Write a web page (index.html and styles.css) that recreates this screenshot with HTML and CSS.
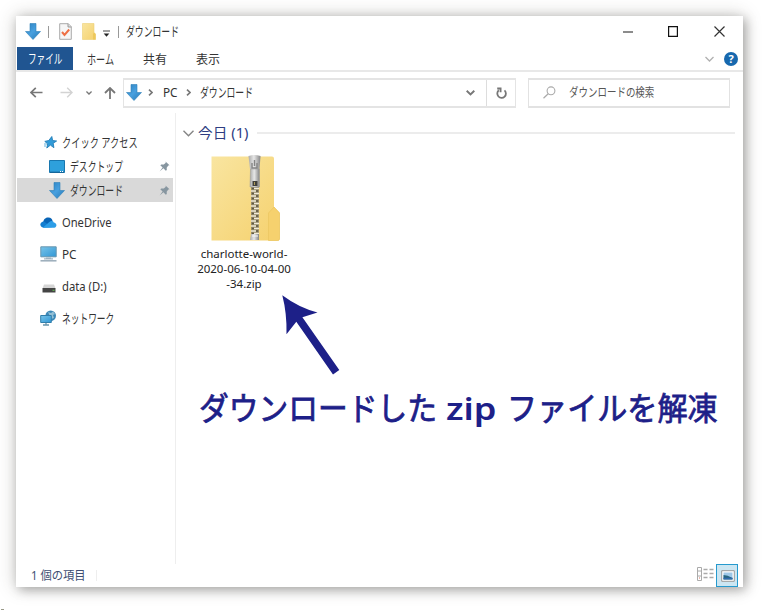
FILE: index.html
```
<!DOCTYPE html>
<html lang="ja">
<head>
<meta charset="utf-8">
<title>ダウンロード</title>
<link rel="stylesheet" href="styles.css">
</head>
<body>
<svg class="defs" width="0" height="0">
  <defs>
    <linearGradient id="blue" x1="0" y1="0" x2="1" y2="1"><stop stop-color="#2c80bd"/><stop offset=".5" stop-color="#48a0df"/><stop offset="1" stop-color="#2578b6"/></linearGradient>
    <linearGradient id="screen" x1="0" y1="0" x2="1" y2="1"><stop stop-color="#78c4e9"/><stop offset="1" stop-color="#3197d5"/></linearGradient>
    <linearGradient id="yellow" x1="0" y1="0" x2="1" y2="1"><stop stop-color="#f9e5a0"/><stop offset="1" stop-color="#f5d16e"/></linearGradient>
    <linearGradient id="metal"><stop stop-color="#aaa"/><stop offset=".45" stop-color="#e7e7e7"/><stop offset="1" stop-color="#858585"/></linearGradient>
    <pattern id="teeth" width="8" height="5" patternUnits="userSpaceOnUse"><rect width="8" height="5" fill="#968b68"/><path d="M0 1h5M3 3.500h5" stroke="#f0ead8" stroke-width="1.600"/><path d="M5 1h2M1 3.500h2" stroke="#5d5745" stroke-width="1.400"/></pattern>
    <symbol id="down" viewBox="0 0 16 17"><path d="M5 .5h6v8h4.500L8 16.500.5 8.500H5z" fill="url(#blue)" stroke="#2d7fb9" stroke-width=".6"/></symbol>
    <symbol id="pin" viewBox="0 0 11 11"><path d="M6.500.5l4 3.800-1.200.3-1.600 2.200.1 2.200-1 .8-2.400-2.500L.6 10.500l3-3.900L1.300 4.200l1-.8 2.500.1 2-1.700z" fill="#8796a0"/></symbol>
  </defs>
</svg>
<main class="window">
  <header class="titlebar">
    <svg width="16" height="17"><use href="#down"/></svg>
    <i class="sep"></i>
    <svg width="13" height="17" viewBox="0 0 13 17"><path d="M.7.700h8.600l3 3v12.600H.7z" fill="#f6f6f6" stroke="#aaa"/><path d="M9 .7v3.300h3.300" fill="#ddd" stroke="#999"/><path d="M3 9l2.500 3 4.700-5.500" fill="none" stroke="#ee7045" stroke-width="2"/></svg>
    <svg width="14" height="17" viewBox="0 0 14 17"><path d="M.5.500H12v9l1.500 1.500v5.500H.5z" fill="url(#yellow)" stroke="#ecd076" stroke-width=".6"/><path d="M11 16.500V11l1-1.500 1.500 1.500v5.500z" fill="#edc85c"/></svg>
    <svg class="drop" width="7" height="7" viewBox="0 0 7 7"><path d="M0 1h7" stroke="#444"/><path d="M.7 3.500h5.600L3.500 6.700z" fill="#222"/></svg>
    <i class="sep"></i>
    <span class="label kana title">ダウンロード</span>
    <svg class="min" width="10" height="2"><path d="M0 1h10" stroke="#666" stroke-width="1.500"/></svg>
    <svg width="10" height="11" viewBox="0 0 10 11"><path d="M.6.600h8.800v9.800H.6z" fill="none" stroke="#111" stroke-width="1.200"/></svg>
    <svg width="11" height="11" viewBox="0 0 11 11"><path d="M.5.500l10 10m0-10l-10 10" stroke="#333" stroke-width="1.200"/></svg>
  </header>
  <nav class="tabs">
    <span class="tab active"><b class="label kana file">ファイル</b></span>
    <span class="label kana home">ホーム</span>
    <span class="label kanji">共有</span>
    <span class="label kanji">表示</span>
    <svg width="9" height="6" viewBox="0 0 9 6"><path d="M.5 1l4 4 4-4" fill="none" stroke="#b0b0b0" stroke-width="1.300"/></svg>
    <span class="help">?</span>
  </nav>
  <section class="addressbar">
    <svg width="13" height="11" viewBox="0 0 13 11"><path d="M12.500 5.500H1M5.800.8L1 5.500l4.800 4.700" fill="none" stroke="#777" stroke-width="1.700"/></svg>
    <svg width="13" height="11" viewBox="0 0 13 11"><path d="M.5 5.500H12M7.200.8L12 5.500l-4.800 4.700" fill="none" stroke="#d3d3d3" stroke-width="1.400"/></svg>
    <svg width="6" height="4" viewBox="0 0 6 4"><path d="M.4.500L3 3 5.600.5" fill="none" stroke="#777" stroke-width="1.400"/></svg>
    <svg class="up" width="12" height="12" viewBox="0 0 12 12"><path d="M6 12V1M1 6l5-5 5 5" fill="none" stroke="#777" stroke-width="1.800"/></svg>
    <div class="path">
      <svg width="16" height="17"><use href="#down"/></svg>
      <svg width="5" height="7" viewBox="0 0 5 7"><path d="M1 .6l3 2.900-3 2.900" fill="none" stroke="#777" stroke-width="1.600"/></svg>
      <span class="label pc">PC</span>
      <svg width="5" height="7" viewBox="0 0 5 7"><path d="M1 .6l3 2.900-3 2.900" fill="none" stroke="#777" stroke-width="1.600"/></svg>
      <span class="label kana title">ダウンロード</span>
      <svg width="9" height="6" viewBox="0 0 9 6"><path d="M.7.800l3.800 3.700L8.300.8" fill="none" stroke="#777" stroke-width="1.900"/></svg>
      <div class="refresh"><svg width="11" height="12" viewBox="0 0 11 12"><path d="M8.500 3.400A4.300 4.300 0 1 1 2.800 3.300M1.200 1.500h3.400v3.700" fill="none" stroke="#777" stroke-width="1.800"/></svg></div>
    </div>
    <div class="search">
      <svg width="13" height="13" viewBox="0 0 13 13"><circle cx="8" cy="4.800" r="3.900" fill="none" stroke="#aaa" stroke-width="1.100"/><path d="M5.200 7.700L.5 12.300" stroke="#aaa" stroke-width="1.200"/></svg>
      <span class="label query">ダウンロードの検索</span>
    </div>
  </section>
  <section class="body">
    <aside class="sidebar">
      <div class="row root">
        <svg width="13" height="13" viewBox="0 0 13 13"><path d="M7.800.5l.8 4 4 .5-3.400 2.200.7 4.500-3.500-2.600L2.800 12l.9-4.200L.8 5.400l4-.9z" fill="#319bd8" stroke="#237eb8" stroke-width=".9"/><path d="M0 8h3M0 10h2" stroke="#67b4de"/></svg>
        <span class="label quick">クイック アクセス</span>
      </div>
      <div class="row child">
        <svg width="16" height="13" viewBox="0 0 16 13"><path d="M.5.500h15v12H.5z" fill="#2ea0dc" stroke="#1977af"/><path d="M1 12.200h14" stroke="#155f91"/><path d="M11 11.500h1m1 0h1" stroke="#fff"/></svg>
        <span class="label desk">デスクトップ</span><svg width="11" height="11"><use href="#pin"/></svg>
      </div>
      <div class="row child selected">
        <svg width="16" height="17"><use href="#down"/></svg>
        <span class="label kana dl">ダウンロード</span><svg width="11" height="11"><use href="#pin"/></svg>
      </div>
      <div class="row drive">
        <svg width="17" height="11" viewBox="0 0 17 11"><path d="M3 7C3 2 6 0 8.500.5 11 .6 12 2 12.600 4L9 8z" fill="#0864b6"/><path d="M3.500 10.800C-1 10-.5 4.500 4 4.400l8 5.800z" fill="#127dd0"/><path d="M3 10.500l6-5.200c2-2 4.500-1.500 4.700.2 3 .1 4 4.300.5 5.300H4z" fill="#2c9de7"/></svg>
        <span class="label one">OneDrive</span>
      </div>
      <div class="row drive">
        <svg width="17" height="16" viewBox="0 0 17 16"><path d="M.8.800h15.400v10H.8z" fill="url(#screen)" stroke="#6896af"/><path d="M6 11h5v2H6z" fill="#bccbd4"/><path d="M4 12.900h9" stroke="#8ca4b4"/><path d="M.5 14.800h16" stroke="#9aacba" stroke-width="1.500"/></svg>
        <span class="label pc">PC</span>
      </div>
      <div class="row drive data">
        <svg width="14" height="9" viewBox="0 0 14 9"><path d="M2 .5h10l1.500 4H.5z" fill="#d5d5d5"/><path d="M.5 4h13v4.500H.5z" fill="#444"/><path d="M10.500 6.300h2" stroke="#62ba50"/></svg>
        <span class="label disk">data (D:)</span>
      </div>
      <div class="row drive">
        <svg width="17" height="16" viewBox="0 0 17 16"><circle cx="10.700" cy="5.700" r="5.300" fill="#3c88b7"/><path d="M8 2l3 1 2-1.500 2 2.500-2 1 1 3-3 1" fill="#93bfd5"/><path d="M.7 5.500h10.600v7H.7z" fill="url(#screen)" stroke="#317eab"/><path d="M6 13v1.500M3 15h6" stroke="#6895ac" stroke-width="1.300"/></svg>
        <span class="label net">ネットワーク</span>
      </div>
    </aside>
    <section class="files">
      <div class="group"><svg width="11" height="7" viewBox="0 0 11 7"><path d="M.5.700l5 5 5-5" fill="none" stroke="#858585" stroke-width="1.400"/></svg><h2 class="label">今日 (1)</h2><i></i></div>
      <figure class="file-item">
        <svg width="69" height="86" viewBox="0 0 69 86">
          <path d="M.5 1.500H61q2 0 2 2V52l5.500 5.500V84q0 1.500-2 1.500H.5z" fill="url(#yellow)"/>
          <path d="M57.500 85.500V58L63 52l5.500 6v26q0 1.500-2 1.500z" fill="#f6d16e" stroke="#ebc560" stroke-width=".7"/>
          <path d="M40 32h8v47h-8z" fill="url(#teeth)"/>
          <path d="M37.500 1q6-2 12 0l-1 13H39z" fill="url(#metal)"/>
          <path d="M39.500 14h9v18h-9.500z" fill="url(#metal)" stroke="#999" stroke-width=".5"/>
          <path d="M41 8v5h5V8M43.500 5v6" fill="none" stroke="#858585" stroke-width="1.400"/>
          <path d="M41.500 26h5v5h-5z" fill="#42413c"/><path d="M43.500 27v3" stroke="#ae9b5b"/>
          <path d="M40 79h8v6h-9z" fill="url(#metal)"/><path d="M41 81h6" stroke="#f7f7f7"/>
        </svg>
        <figcaption><span class="f1">charlotte-world-</span><span class="f2">2020-06-10-04-00</span><span class="f3">-34.zip</span></figcaption>
      </figure>
    </section>
  </section>
  <footer class="status">
    <span class="label count">1 個の項目</span><i></i>
    <svg width="17" height="14" viewBox="0 0 17 14"><path d="M.5.500h4v13h-4zM.5 4h4M.5 9h4" fill="none" stroke="#aaa"/><path d="M6.500 2.500h4m2 0h4m-10 4h4m2 0h4m-10 4h4m2 0h4" stroke="#aaa" stroke-width="1.500"/><path d="M2 11h1" stroke="#d8735c"/></svg>
    <span class="view"><svg width="14" height="12" viewBox="0 0 14 12"><path d="M.7.700h12.600v10.600H.7z" fill="#fff" stroke="#999"/><path d="M2.500 2.500h9v7h-9z" fill="#9fc8e8"/><path d="M2.500 5q4 0 9 3v1.500h-9z" fill="#286781"/><path d="M2.500 8.500h9" stroke="#326baf" stroke-width="1.500"/></svg></span>
  </footer>
</main>
<svg class="pointer" width="60" height="82" viewBox="0 0 60 82"><path d="M.3.300Q17 12.800 35.500 17.500L20.400 22.300 57.300 74.900 51 79.500 14.300 26.800 4.500 39.200Q5 18.500.3.300z" fill="#1d2088"/></svg>
<p class="caption"><span class="c1">ダウンロードした</span><span class="c2">zip</span><span class="c3">ファイルを解凍</span></p>
<i class="speck"></i>
</body>
</html>
```
FILE: styles.css
```
* { box-sizing: border-box; }
body { margin: 0; width: 764px; height: 610px; overflow: hidden; background: #fff; position: relative; font-family: "Noto Sans", "Noto Sans CJK JP", sans-serif; font-size: 12px; line-height: 18px; color: #333; }
svg { display: block; }
.defs { position: absolute; }
.window { width: 727px; height: 571px; margin: 16px 0 0 16px; background: #fff; box-shadow: 3px 3px 10px rgba(0,0,0,.25), 0 0 17px rgba(60,55,45,.27); display: grid; grid-template-rows: 31px 25px 41px 451px 23px; }
.label { display: block; white-space: nowrap; transform-origin: 0 50%; font-weight: 400; font-style: normal; }
.kana { font-size: 13px; }
.title { transform: scaleX(.68); margin-top: -1px; }
.titlebar { display: grid; grid-template-columns: 23px 11px 23px 21px 15px 8px 497px 45px 46px 11px; padding-left: 9px; align-items: center; }
.sep { width: 1px; height: 12px; background: #999; }
.drop { margin-top: 3px; }
.min { margin-top: 1px; }
.tabs { display: grid; grid-template-columns: 56px 14px 56px 53px 509px 19px 14px; padding-left: 1px; border-bottom: 2px solid #e8e8e8; align-items: center; }
.tabs .home { grid-column: 3; }
.tab.active { height: 23px; background: #205591; color: #fff; padding: 2px 0 0 11px; }
.file { transform: scaleX(.66); }
.home { transform: scaleX(.7); }
.kanji { margin-top: 2px; }
.help { width: 14px; height: 14px; border-radius: 50%; background: #1768ae; color: #fff; font-size: 11px; line-height: 14px; text-align: center; font-weight: 700; }
.addressbar { display: grid; grid-template-columns: 30px 26px 18px 19px 393px 202px; padding-left: 14px; align-items: center; }
.path { width: 393px; height: 30px; border: 2px solid #e4e4e4; border-width: 2px 1px; padding-left: 2px; display: grid; grid-template-columns: 22px 15px 23px 14px 266px 20px 29px; align-items: center; }
.pc { transform: scaleX(.98); }
.refresh { height: 26px; border-left: 1px solid #ddd; padding: 7px 0 0 9px; }
.search { width: 202px; height: 30px; margin-left: 12px; border: 2px solid #e2e2e2; border-width: 2px 1px; display: flex; align-items: center; gap: 13px; padding-left: 14px; }
.query { color: #555; transform: scaleX(.79); }
.body { display: grid; grid-template-columns: 160px 1fr; }
.sidebar { border-right: 1px solid #eee; padding: 17px 2px 0 1px; }
.row { height: 24px; display: grid; align-items: center; }
.root { grid-template-columns: 18px 1fr; padding-left: 27px; }
.child { grid-template-columns: 21px 89px 11px; padding-left: 32px; }
.selected { background: #d9d9d9; }
.drive { grid-template-columns: 22px 1fr; padding-left: 23px; margin-top: 8px; }
.drive .label { margin-top: 1px; }
.data svg { margin: 5px 0 0 2px; }
.quick { font-size: 13px; transform: scaleX(.71); }
.desk { font-size: 13px; transform: scaleX(.68); margin-top: -1px; }
.dl { transform: scaleX(.68); margin-top: -1px; }
.one { transform: scaleX(.93); }
.disk { transform: scaleX(.94); }
.drive .net { font-size: 13px; transform: scaleX(.67); margin-top: -1px; }
.files { padding: 10px 8px 0 7px; }
.group { display: grid; grid-template-columns: 15px 59px 1fr; height: 20px; align-items: center; }
.group h2 { margin: 0; font-size: 14px; color: #2e3d82; transform: scaleX(1.05); }
.group i { height: 2px; background: #ececec; }
.file-item { width: 96px; margin: 12px 0 0 13px; }
.file-item svg { margin-left: 15px; }
figcaption { margin-top: 5px; display: grid; justify-items: center; font-size: 11.500px; line-height: 15px; white-space: nowrap; color: #222; }
.status { display: grid; grid-template-columns: 65px 601px 19px 22px; padding-left: 15px; align-items: center; }
.status > svg { margin-top: -3px; }
.status > i { width: 1px; height: 11px; background: #eee; }
.count { color: #405073; transform: scaleX(.94); }
.view { height: 23px; border: 1px solid #269ace; background: #cce6f2; padding: 5px 0 0 4px; }
.pointer { position: absolute; left: 282px; top: 295px; }
.caption { position: absolute; left: 199px; top: 386px; margin: 0; display: grid; grid-template-columns: 247px 61px 220px; font-size: 32px; line-height: 44px; color: #1d2088; white-space: nowrap; }
.caption span { transform-origin: 0 50%; -webkit-text-stroke: .8px #1d2088; }
.caption .c1 { transform: scaleX(.93); }
.caption .c3 { transform: scaleX(.94); }
.caption .c2 { font-weight: 600; font-size: 31px; justify-self: start; transform: scaleX(1.17); -webkit-text-stroke: 0; }
.speck { position: absolute; left: 1px; top: 609px; width: 3px; height: 1px; background: #998; }
```
